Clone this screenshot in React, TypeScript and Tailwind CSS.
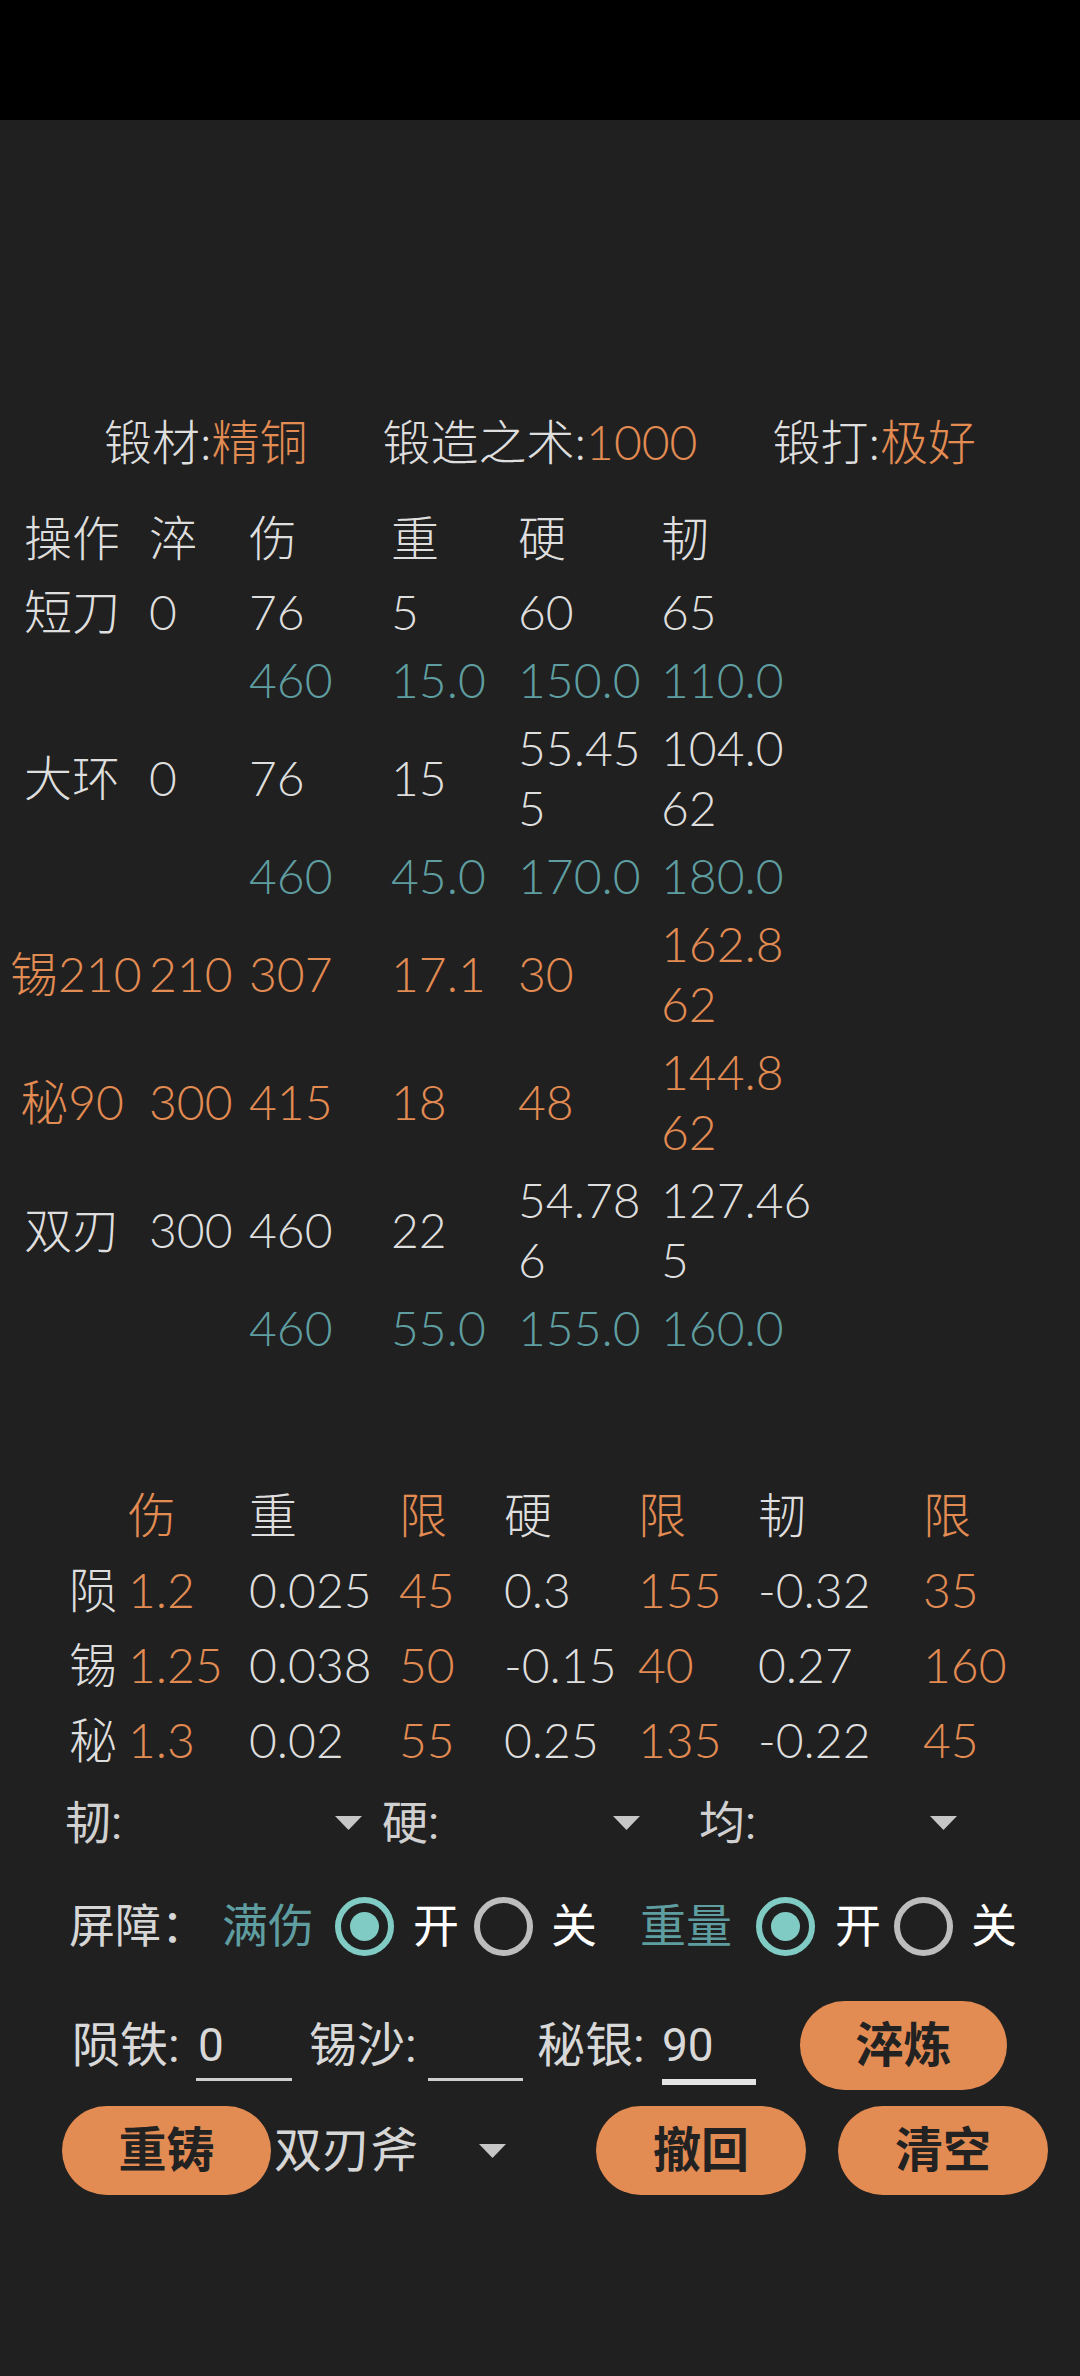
import React from 'react';

type Cell = string | [string, string];

const W = 'text-[#dedede]';
const T = 'text-[#5f9ea0]';
const O = 'text-[#e28b52]';

const mainRows: { h: string; color: string; cells: Cell[] }[] = [
  { h: 'h-[80px]', color: W, cells: ['操作', '淬', '伤', '重', '硬', '韧'] },
  { h: 'h-[68px]', color: W, cells: ['短刀', '0', '76', '5', '60', '65'] },
  { h: 'h-[68px]', color: T, cells: ['', '', '460', '15.0', '150.0', '110.0'] },
  { h: 'h-[128px]', color: W, cells: ['大环', '0', '76', '15', ['55.45', '5'], ['104.0', '62']] },
  { h: 'h-[68px]', color: T, cells: ['', '', '460', '45.0', '170.0', '180.0'] },
  { h: 'h-[128px]', color: O, cells: ['锡210', '210', '307', '17.1', '30', ['162.8', '62']] },
  { h: 'h-[128px]', color: O, cells: ['秘90', '300', '415', '18', '48', ['144.8', '62']] },
  { h: 'h-[128px]', color: W, cells: ['双刃', '300', '460', '22', ['54.78', '6'], ['127.46', '5']] },
  { h: 'h-[68px]', color: T, cells: ['', '', '460', '55.0', '155.0', '160.0'] },
];

const rateCols = [W, O, W, O, W, O, W, O];
const rateRows: string[][] = [
  ['', '伤', '重', '限', '硬', '限', '韧', '限'],
  ['陨', '1.2', '0.025', '45', '0.3', '155', '-0.32', '35'],
  ['锡', '1.25', '0.038', '50', '-0.15', '40', '0.27', '160'],
  ['秘', '1.3', '0.02', '55', '0.25', '135', '-0.22', '45'],
];

const Arrow = () => (
  <svg width="27" height="14" viewBox="0 0 27 14" className="shrink-0">
    <polygon points="0,0 27,0 13.5,14" fill="#c6c6c6" />
  </svg>
);

const Radio = ({ on }: { on: boolean }) =>
  on ? (
    <div className="w-[59px] h-[59px] rounded-full border-[6px] border-[#80cbc4] flex items-center justify-center shrink-0">
      <div className="w-[29px] h-[29px] rounded-full bg-[#80cbc4]" />
    </div>
  ) : (
    <div className="w-[59px] h-[59px] rounded-full border-[6px] border-[#bdbdbd] shrink-0" />
  );

const Pill = ({ label, cls }: { label: string; cls: string }) => (
  <div
    className={`${cls} h-[89px] rounded-full bg-[#e28b52] flex items-center justify-center text-[48px] font-bold text-[#222222] shrink-0`}
  >
    {label}
  </div>
);

export default function App() {
  return (
    <div className="min-h-[2376px] bg-[#202020] font-[Lato,'Noto_Sans_CJK_SC',sans-serif]">
      <div className="h-[120px] bg-black" />

      <div className="font-light">
        {/* forge info */}
        <div className="mt-[292px] h-[60px] flex justify-center items-center gap-[75px] text-[48px] leading-[60px] whitespace-nowrap">
          <span>
            <span className={W}>锻材:</span>
            <span className={O}>精铜</span>
          </span>
          <span>
            <span className={W}>锻造之术:</span>
            <span className={O}>1000</span>
          </span>
          <span>
            <span className={W}>锻打:</span>
            <span className={O}>极好</span>
          </span>
        </div>

        {/* main table */}
        <div className="mt-[26px] text-[48px] leading-[60px]">
          {mainRows.map((r, i) => (
            <div
              key={i}
              className={`grid grid-cols-[139px_100px_142px_127px_143px_150px] pl-[10px] items-center ${r.h} ${r.color}`}
            >
              {r.cells.map((c, j) => (
                <div key={j} className={j === 0 ? 'text-center pr-[15px] whitespace-nowrap' : 'whitespace-nowrap'}>
                  {Array.isArray(c) ? (
                    <>
                      {c[0]}
                      <br />
                      {c[1]}
                    </>
                  ) : (
                    c
                  )}
                </div>
              ))}
            </div>
          ))}
        </div>

        {/* rate table */}
        <div className="mt-[115px] text-[48px] leading-[60px]">
          {rateRows.map((r, i) => (
            <div
              key={i}
              className="grid grid-cols-[59px_121px_150px_105px_134px_120px_165px_1fr] pl-[69px] h-[75px] items-center"
            >
              {r.map((c, j) => (
                <div key={j} className={`whitespace-nowrap ${rateCols[j]}`}>
                  {c}
                </div>
              ))}
            </div>
          ))}
        </div>
      </div>

      <div className="font-[Roboto,'Noto_Sans_CJK_SC',sans-serif]">
        {/* spinners */}
        <div className="mt-[16px] h-[60px] flex items-center pl-[65px] text-[46px] text-[#d0d0d0] whitespace-nowrap">
          <div className="w-[270px]">韧:</div>
          <Arrow />
          <div className="w-[20px]" />
          <div className="w-[231px]">硬:</div>
          <Arrow />
          <div className="w-[59px]" />
          <div className="w-[231px]">均:</div>
          <Arrow />
        </div>

        {/* barrier radios */}
        <div className="mt-[43px] h-[60px] flex items-center pl-[69px] text-[46px] whitespace-nowrap">
          <div className="w-[153px] text-[#d6d6d6]">屏障：</div>
          <div className="w-[113px] text-[#5f9ea0]">满伤</div>
          <div className="w-[78px]">
            <Radio on />
          </div>
          <div className="w-[61px] text-white">开</div>
          <div className="w-[77px]">
            <Radio on={false} />
          </div>
          <div className="w-[89px] text-white">关</div>
          <div className="w-[116px] text-[#5f9ea0]">重量</div>
          <div className="w-[79px]">
            <Radio on />
          </div>
          <div className="w-[59px] text-white">开</div>
          <div className="w-[77px]">
            <Radio on={false} />
          </div>
          <div className="text-white">关</div>
        </div>

        {/* material inputs */}
        <div className="mt-[45px] h-[89px] flex items-center pl-[72px] text-[48px] text-[#d8d8d8] whitespace-nowrap">
          <div className="w-[124px]">陨铁:</div>
          <div className="w-[96px] self-stretch flex flex-col justify-end pb-[9px]">
            <div className="text-[46px] leading-[46px] pl-[2px] mb-[10px]">0</div>
            <div className="h-[3px] bg-[#cfcfcf]" />
          </div>
          <div className="w-[119px] ml-[17px]">锡沙:</div>
          <div className="w-[95px] self-stretch flex flex-col justify-end pb-[9px]">
            <div className="text-[46px] leading-[46px] mb-[10px]">&nbsp;</div>
            <div className="h-[3px] bg-[#cfcfcf]" />
          </div>
          <div className="w-[125px] ml-[14px]">秘银:</div>
          <div className="w-[94px] self-stretch flex flex-col justify-end pb-[5px]">
            <div className="text-[46px] leading-[46px] mb-[11px]">90</div>
            <div className="h-[6px] bg-[#e4e4e4]" />
          </div>
          <Pill label="淬炼" cls="w-[207px] ml-[44px]" />
        </div>

        {/* actions */}
        <div className="mt-[16px] h-[89px] flex items-center pl-[62px] whitespace-nowrap">
          <Pill label="重铸" cls="w-[209px]" />
          <div className="w-[205px] ml-[3px] text-[48px] text-[#d6d6d6]">双刃斧</div>
          <Arrow />
          <Pill label="撤回" cls="w-[210px] ml-[90px]" />
          <Pill label="清空" cls="w-[210px] ml-[32px]" />
        </div>
      </div>
    </div>
  );
}
